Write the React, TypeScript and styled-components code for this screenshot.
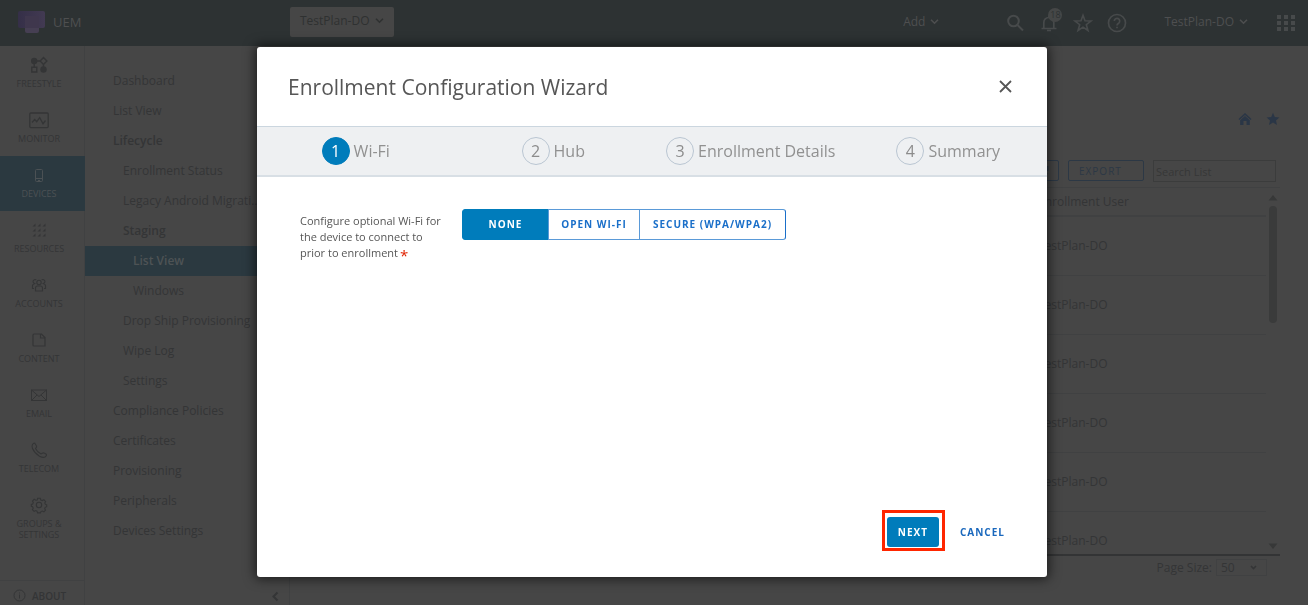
import React from "react";
import styled, { createGlobalStyle, css } from "styled-components";

const Global = createGlobalStyle`
  *, *::before, *::after { box-sizing: border-box; }
  body { margin: 0; background: #464646; }
  button, input, select { font: inherit; color: inherit; margin: 0; }
  a { color: inherit; text-decoration: none; }
  svg { display: block; flex: none; }
`;

const ink = "#343536";
const line = "#404142";

const Page = styled.div`
  height: 100vh;
  min-height: 605px;
  display: flex;
  flex-direction: column;
  font: 12px/18px "Open Sans", sans-serif;
  color: ${ink};
  background: #464646;
`;

const TopBar = styled.header`
  height: 46px;
  flex: none;
  display: flex;
  align-items: center;
  background: #2d3233;
  color: #4e4f50;
`;

const Brand = styled.a`
  width: 290px;
  flex: none;
  padding: 0 0 2px 18px;
  display: flex;
  align-items: center;
  gap: 8px;
  font-size: 13px;
  line-height: 22px;
`;

const MenuButton = styled.button`
  border: 0;
  padding: 0;
  background: none;
  display: flex;
  align-items: center;
  gap: 5px;
  white-space: nowrap;
`;

const ScopeButton = styled(MenuButton)`
  height: 30px;
  padding: 0 10px 2px;
  border-radius: 2px;
  background: #464646;
  color: #2f3131;
  margin-bottom: 3px;
`;

const TopActions = styled.div`
  margin-left: auto;
  display: flex;
  align-items: center;
  padding-right: 13px;
  padding-bottom: 3px;
`;

const IconGroup = styled.div`
  display: flex;
  align-items: center;
  gap: 14px;
  padding-top: 2px;
  margin-left: 66px;
  margin-right: 37px;
  color: #474a4b;
`;

const IconButton = styled.button`
  position: relative;
  border: 0;
  padding: 0;
  background: none;
  display: flex;
`;

const Badge = styled.span`
  position: absolute;
  left: 9px;
  top: -5px;
  width: 14px;
  height: 14px;
  border-radius: 7px;
  background: #454747;
  color: #2d3233;
  font-size: 9px;
  line-height: 14px;
  text-align: center;
`;

const AppsButton = styled(IconButton)`
  margin-left: 29px;
  padding-top: 3px;
  color: #474a4b;
`;

const Columns = styled.div`
  flex: 1;
  min-height: 0;
  display: flex;
`;

const Rail = styled.nav`
  width: 85px;
  flex: none;
  display: flex;
  flex-direction: column;
  border-right: 1px solid ${line};
`;

const RailItem = styled.a<{ $active?: boolean }>`
  height: 55px;
  flex: none;
  padding: 10px 7px 0 0;
  display: flex;
  flex-direction: column;
  align-items: center;
  gap: 4px;
  font-size: 9px;
  line-height: 11px;
  text-align: center;
  margin-right: -1px;
  ${(p) => p.$active && css`background: #2b3940; color: #4b5154;`}
`;

const About = styled.a`
  margin-top: auto;
  height: 25px;
  display: flex;
  align-items: center;
  gap: 6px;
  padding: 5px 0 0 13px;
  border-top: 1px solid ${line};
  font-size: 10px;
  line-height: 14px;
  font-weight: 600;
`;

const SubNav = styled.nav`
  width: 205px;
  flex: none;
  display: flex;
  flex-direction: column;
  padding-top: 20px;
  border-right: 1px solid ${line};
`;

const SubLink = styled.a<{ $level: number; $bold?: boolean; $active?: boolean }>`
  display: block;
  padding: 0 28px 0 ${(p) => 18 + p.$level * 10}px;
  line-height: 30px;
  white-space: nowrap;
  overflow: hidden;
  text-overflow: ellipsis;
  font-weight: ${(p) => (p.$bold ? 600 : 400)};
  ${(p) => p.$active && css`background: #2b3940; color: #4e5355;`}
`;

const Collapse = styled(IconButton)`
  margin: auto 10px 3px auto;
`;

const Main = styled.main`
  flex: 1;
  min-width: 0;
  display: flex;
  flex-direction: column;
  padding: 66px 28px 0 32px;
`;

const PageLinks = styled.div`
  display: flex;
  justify-content: flex-end;
  gap: 14px;
  color: #2a3646;
`;

const Tools = styled.div`
  display: flex;
  justify-content: flex-end;
  align-items: flex-start;
  gap: 9px;
  padding: 34px 4px 5px 0;
`;

const ToolButton = styled.button<{ $w: number }>`
  width: ${(p) => p.$w}px;
  height: 21px;
  display: flex;
  align-items: center;
  padding: 0 10px;
  border: 1px solid #2c3845;
  border-radius: 2px;
  background: none;
  color: #2c3845;
  font-size: 10px;
  letter-spacing: 1px;
`;

const Search = styled.input`
  width: 123px;
  height: 22px;
  padding: 0 2px;
  border: 1px solid #3b3c3c;
  border-radius: 0;
  background: none;
  font-size: 11px;
  &::placeholder { color: #363737; opacity: 1; }
`;

const ListFrame = styled.div`
  flex: 1;
  min-height: 0;
  display: flex;
  overflow: hidden;
  border-top: 1px solid ${line};
  border-bottom: 2px solid #333435;
`;

const Table = styled.table`
  flex: 1;
  display: table;
  border-collapse: collapse;
  table-layout: fixed;
  height: 383px;
  th, td {
    padding: 0 0 0 calc(100% - 228px);
    height: 59px;
    text-align: left;
    font-weight: 400;
    border-bottom: 1px solid ${line};
  }
  th { height: 28px; border-bottom: 2px solid ${line}; }
`;

const ScrollTrack = styled.div`
  width: 14px;
  flex: none;
  padding: 7px 3px 5px;
  display: flex;
  flex-direction: column;
  align-items: center;
  gap: 5px;
  color: #373838;
`;

const Thumb = styled.div`
  width: 8px;
  height: 117px;
  border-radius: 4px;
  background: #3a3b3b;
  margin-bottom: auto;
`;

const Pager = styled.label`
  height: 49px;
  flex: none;
  display: flex;
  align-items: flex-start;
  justify-content: flex-end;
  gap: 4px;
  padding: 3px 13px 0 0;
`;

const SelectWrap = styled.span`
  display: grid;
  align-items: center;
  width: 51px;
  height: 17px;
  border: 1px solid ${line};
  > * { grid-area: 1 / 1; }
  > svg { justify-self: end; margin-right: 9px; pointer-events: none; }
`;

const PageSize = styled.select`
  appearance: none;
  width: 100%;
  height: 15px;
  padding: 0 4px;
  border: 0;
  background: none;
  line-height: 15px;
`;

const Backdrop = styled.div`
  position: fixed;
  inset: 0;
  display: flex;
  padding: 47px 261px 28px 257px;
`;

const Dialog = styled.section`
  flex: 1;
  display: flex;
  flex-direction: column;
  background: #fff;
  border-radius: 3px;
  box-shadow: 0 0 12px 2px rgba(0, 0, 0, 0.6);
  color: #565656;
  font-family: "Open Sans", sans-serif;
`;

const DialogHead = styled.div`
  height: 79px;
  flex: none;
  display: flex;
  align-items: center;
  justify-content: space-between;
  padding: 0 35px 0 31px;
`;

const Title = styled.h1`
  margin: 0;
  font-size: 21px;
  line-height: 28px;
  font-weight: 400;
`;

const Steps = styled.ol`
  margin: 0;
  padding: 0;
  height: 51px;
  flex: none;
  list-style: none;
  display: grid;
  grid-template-columns: repeat(4, 1fr);
  align-items: center;
  background: #eef0f2;
  border-top: 1px solid #cbd6df;
  border-bottom: 2px solid #d8dfe5;
`;

const Step = styled.li`
  display: flex;
  align-items: center;
  justify-content: center;
  gap: 4px;
  font-size: 16px;
  line-height: 20px;
  color: #919191;
  white-space: nowrap;
`;

const StepNumber = styled.span<{ $current: boolean }>`
  width: 28px;
  height: 28px;
  border-radius: 50%;
  line-height: 26px;
  text-align: center;
  border: 1px solid ${(p) => (p.$current ? "#007cbb" : "#bac6d2")};
  background: ${(p) => (p.$current ? "#007cbb" : "transparent")};
  color: ${(p) => (p.$current ? "#fff" : "#8c8c8c")};
`;

const Field = styled.fieldset`
  border: 0;
  margin: 0;
  padding: 32px 43px 0;
  min-width: 0;
  display: flex;
  align-items: flex-start;
  gap: 12px;
`;

const FieldLabel = styled.div`
  width: 150px;
  flex: none;
  padding-top: 4px;
  font-size: 11px;
  line-height: 16px;
`;

const Required = styled.span`
  display: inline-block;
  vertical-align: top;
  color: #e02200;
  font-size: 15px;
  line-height: 20px;
  height: 16px;
  margin-left: 2px;
`;

const Segments = styled.div`
  display: flex;
  height: 31px;
`;

const buttonText = css`
  font-size: 10px;
  line-height: 16px;
  font-weight: 700;
  letter-spacing: 1px;
`;

const Segment = styled.button<{ $on?: boolean; $w: number }>`
  ${buttonText}
  width: ${(p) => p.$w}px;
  padding: 0 0 1px;
  border: 1px solid #5a9ad8;
  margin-left: -1px;
  background: ${(p) => (p.$on ? "#007cbb" : "#fff")};
  color: ${(p) => (p.$on ? "#fff" : "#1a6fc9")};
  white-space: nowrap;
  &:first-child { border-radius: 3px 0 0 3px; border-color: #007cbb; margin-left: 0; }
  &:last-child { border-radius: 0 3px 3px 0; border-right-color: #1a6fc9; }
`;

const DialogFoot = styled.div`
  margin-top: auto;
  display: flex;
  align-items: center;
  justify-content: flex-end;
  gap: 15px;
  padding: 0 42px 26px;
`;

const Highlight = styled.div`
  border: 3px solid #ff2600;
  padding: 4px 3px 1px 2px;
`;

const Next = styled.button`
  ${buttonText}
  display: block;
  width: 52px;
  height: 30px;
  padding: 0;
  border: 0;
  border-radius: 3px;
  background: #007cbb;
  color: #fff;
`;

const Cancel = styled.button`
  ${buttonText}
  padding: 2px 0 0;
  border: 0;
  background: none;
  color: #1a68bd;
`;

const Svg = ({ w, h, children, sw = 1, fill = "none" }: { w: number; h: number; children: React.ReactNode; sw?: number; fill?: string }) => (
  <svg width={w} height={h} viewBox={`0 0 ${w} ${h}`} fill={fill} stroke={fill === "none" ? "currentColor" : "none"} strokeWidth={sw} aria-hidden="true">
    {children}
  </svg>
);

const Chevron = () => (
  <Svg w={9} h={7} sw={1.6}><path d="M1 1.7l3.5 3.5L8 1.7" /></Svg>
);

const dots = [0, 1, 2].flatMap((r) => [0, 1, 2].map((c) => [c, r]));

const railIcons: Record<string, React.ReactNode> = {
  Freestyle: (
    <Svg w={18} h={18} sw={1.4}>
      <circle cx="4.2" cy="5" r="3.2" fill="currentColor" stroke="none" />
      <circle cx="13.5" cy="13.5" r="3.2" fill="currentColor" stroke="none" />
      <path d="M13.5 1.4L16.9 5l-3.4 3.5L10.1 5zM1.8 11.2h5v4.8h-5zM4.2 7.5v3.5M7 5h3M13.5 8.5v2.5" />
    </Svg>
  ),
  Monitor: (
    <Svg w={20} h={18} sw={1.3}>
      <rect x=".8" y="2" width="18.4" height="14.6" rx="1" />
      <path d="M3 11.5l2.7-3 2 2.2 3-4 3.3 6 2.5-3.2" />
    </Svg>
  ),
  Devices: (
    <Svg w={18} h={18}>
      <rect x="5.5" y="3.5" width="7" height="12" rx="1" />
      <path d="M5.5 12.500h7M8 14.500h2" />
    </Svg>
  ),
  Resources: (
    <Svg w={18} h={18} fill="currentColor">
      {dots.map(([c, r]) => <path key={`${c}${r}`} d={`M${2.5 + c * 5} ${5.5 + r * 5}h3v-3z`} />)}
    </Svg>
  ),
  Accounts: (
    <Svg w={18} h={18} sw={1.1}>
      <circle cx="9" cy="6.5" r="2.2" />
      <path d="M5.5 15v-3q0-2 2-2h3q2 0 2 2v3zM5.5 7.5a2 2 0 1 1 .8-3.5M12.5 7.5a2 2 0 1 0-.8-3.5M4 12.5H2.5V10q0-2 2-2M14 12.5h1.5V10q0-2-2-2" />
    </Svg>
  ),
  Content: (
    <Svg w={18} h={18} sw={1.2}>
      <path d="M4 3h7.500L15 6.500V15H4q-1 0-1-1V4q0-1 1-1zM10.500 3v4H15" />
    </Svg>
  ),
  Email: (
    <Svg w={18} h={18}>
      <rect x="1.5" y="4" width="15" height="10.5" />
      <path d="M1.500 4L9 10.500 16.500 4M1.500 14.500L7 9M16.500 14.500L11 9" />
    </Svg>
  ),
  Telecom: (
    <Svg w={18} h={18} sw={1.1}>
      <path d="M2.500 3.500q1.500-2 2.500-1 2 2.500 1.500 3.700l-1 1.300q2 4 5.500 5.500l1.800-1q1.200-.5 3.700 1.500.5 1-1.500 2.500-2 1-5.500-.8-5-3-7-7.700-1-2.500 0-4z" />
    </Svg>
  ),
  "Groups & Settings": (
    <Svg w={18} h={18} sw={1.1}>
      <circle cx="9" cy="9" r="2.700" />
      <path d="M7.700 2.300h2.600l.5 1.700 1.500.6 1.600-.9 1.700 1.800-.8 1.500.6 1.400 1.300.4v1.900l-1.500.6-.5 1.300.8 1.500-1.600 1.700-1.600-.8-1.400.6-.5 1.300H7.600L7 15.200l-1.300-.6-1.600.8-1.700-1.700.8-1.500-.6-1.400-1.300-.5V8.400L2.700 8l.6-1.500-.8-1.500 1.700-1.700 1.600.9L7.200 4z" />
    </Svg>
  ),
};

const nav: { text: string; level: number; bold?: boolean; active?: boolean }[] = [
  { text: "Dashboard", level: 1 },
  { text: "List View", level: 1 },
  { text: "Lifecycle", level: 1, bold: true },
  { text: "Enrollment Status", level: 2 },
  { text: "Legacy Android Migration", level: 2 },
  { text: "Staging", level: 2, bold: true },
  { text: "List View", level: 3, bold: true, active: true },
  { text: "Windows", level: 3 },
  { text: "Drop Ship Provisioning", level: 2 },
  { text: "Wipe Log", level: 2 },
  { text: "Settings", level: 2 },
  { text: "Compliance Policies", level: 1 },
  { text: "Certificates", level: 1 },
  { text: "Provisioning", level: 1 },
  { text: "Peripherals", level: 1 },
  { text: "Devices Settings", level: 1 },
];

const users = Array.from({ length: 6 }, () => "TestPlan-DO");
const steps = ["Wi-Fi", "Hub", "Enrollment Details", "Summary"];

export default function App() {
  return (
    <>
      <Global />
      <Page>
        <TopBar>
          <Brand href="#">
            <svg width="27" height="23" viewBox="0 0 27 23" aria-hidden="true">
              <defs>
                <linearGradient id="brand-screen">
                  <stop offset="0" stopColor="#352f48" />
                  <stop offset="1" stopColor="#423a52" />
                </linearGradient>
              </defs>
              <rect width="27" height="17" rx="2" fill="url(#brand-screen)" />
              <rect x="7" y="5" width="14" height="17" rx="2" fill="#463f53" />
              <rect x="7" y="5" width="14" height="12" fill="#3f374d" />
            </svg>
            UEM
          </Brand>
          <ScopeButton type="button">TestPlan-DO <Chevron /></ScopeButton>
          <TopActions>
            <MenuButton type="button">Add <Chevron /></MenuButton>
            <IconGroup>
              <IconButton type="button" aria-label="Search">
                <Svg w={20} h={20} sw={2}><circle cx="8.500" cy="8" r="5.300" /><path d="M12.500 12l5.500 5.500" /></Svg>
              </IconButton>
              <IconButton type="button" aria-label="Notifications">
                <Svg w={20} h={20} sw={1.7}>
                  <path d="M2.500 15.500h15M4.800 15.500V9.500a5 5 0 0 1 10 0v6M8 17.500h4" />
                  <path d="M9.800 2.500v2" />
                </Svg>
                <Badge>18</Badge>
              </IconButton>
              <IconButton type="button" aria-label="Favorites">
                <Svg w={20} h={20} sw={1.6}><path d="M10 2.300l2 5.500 6 .2-4.700 3.700 1.700 5.800-5-3.400-5 3.400 1.700-5.800L2 8l6-.2z" /></Svg>
              </IconButton>
              <IconButton type="button" aria-label="Help">
                <Svg w={20} h={20} sw={1.7}>
                  <circle cx="10" cy="10" r="8.500" />
                  <path d="M7.300 8a2.700 2.700 0 1 1 4.300 2.200Q10 11.200 10 12.400M10 13.700v1.600" />
                </Svg>
              </IconButton>
            </IconGroup>
            <MenuButton type="button">TestPlan-DO <Chevron /></MenuButton>
            <AppsButton type="button" aria-label="Apps">
              <Svg w={18} h={18} fill="currentColor">
                {dots.map(([c, r]) => <rect key={`${c}${r}`} x={c * 7} y={1 + r * 6} width="4" height="4" />)}
              </Svg>
            </AppsButton>
          </TopActions>
        </TopBar>
        <Columns>
          <Rail aria-label="Sections">
            {Object.entries(railIcons).map(([name, icon]) => (
              <RailItem key={name} href="#" $active={name === "Devices"}>
                {icon}
                {name.toUpperCase()}
              </RailItem>
            ))}
            <About href="#">
              <Svg w={13} h={13}><circle cx="6.500" cy="6.500" r="5.500" /><path d="M6.500 3.500v1M6.500 5.500v4" /></Svg>
              ABOUT
            </About>
          </Rail>
          <SubNav aria-label="Devices">
            {nav.map((n, i) => (
              <SubLink key={i} href="#" $level={n.level} $bold={n.bold} $active={n.active}>{n.text}</SubLink>
            ))}
            <Collapse type="button" aria-label="Collapse menu">
              <Svg w={8} h={11} sw={2}><path d="M6.500 1.500l-4 4 4 4" /></Svg>
            </Collapse>
          </SubNav>
          <Main>
            <PageLinks>
              <a href="#" aria-label="Home">
                <Svg w={14} h={14} fill="currentColor"><path d="M7 1l6.500 6-.9.900L7 3 1.400 7.900.5 7zM7 4l4.800 4.200V13H8.500V9h-3v4H2.200V8.200z" /></Svg>
              </a>
              <a href="#" aria-label="Favorite">
                <Svg w={14} h={14} fill="currentColor"><path d="M7 .8l1.800 4.100 4.600.5L10 8.400l1 4.600-4-2.400L3 13l1-4.600L.6 5.400l4.600-.5z" /></Svg>
              </a>
            </PageLinks>
            <Tools>
              <ToolButton type="button" $w={33} aria-label="Refresh">
                <Svg w={12} h={12} sw={2}><path d="M10 4.500A4.300 4.300 0 1 0 10 8M10.500 1v4h-4" /></Svg>
              </ToolButton>
              <ToolButton type="button" $w={76}>EXPORT</ToolButton>
              <Search aria-label="Search List" placeholder="Search List" />
            </Tools>
            <ListFrame>
              <Table>
                <thead><tr><th>Enrollment User</th></tr></thead>
                <tbody>{users.map((u, i) => <tr key={i}><td>{u}</td></tr>)}</tbody>
              </Table>
              <ScrollTrack>
                <Svg w={10} h={6} fill="currentColor"><path d="M5 0l4.500 5.500h-9z" /></Svg>
                <Thumb />
                <Svg w={10} h={6} fill="currentColor"><path d="M5 6L.5.500h9z" /></Svg>
              </ScrollTrack>
            </ListFrame>
            <Pager>
              Page Size:
              <SelectWrap>
                <PageSize defaultValue="50"><option>50</option><option>100</option></PageSize>
                <Svg w={7} h={5} sw={1.6}><path d="M1 1l2.500 2.500L6 1" /></Svg>
              </SelectWrap>
            </Pager>
          </Main>
        </Columns>
      </Page>
      <Backdrop>
        <Dialog role="dialog" aria-modal="true" aria-labelledby="wizard-title">
          <DialogHead>
            <Title id="wizard-title">Enrollment Configuration Wizard</Title>
            <IconButton type="button" aria-label="Close">
              <Svg w={13} h={13} sw={1.8}><path d="M1 1l11 11M12 1L1 12" /></Svg>
            </IconButton>
          </DialogHead>
          <Steps>
            {steps.map((s, i) => (
              <Step key={s} aria-current={i === 0 ? "step" : undefined}>
                <StepNumber $current={i === 0}>{i + 1}</StepNumber>
                {s}
              </Step>
            ))}
          </Steps>
          <Field aria-labelledby="wifi-label">
            <FieldLabel id="wifi-label">
              Configure optional Wi-Fi for the device to connect to prior to enrollment<Required>*</Required>
            </FieldLabel>
            <Segments>
              <Segment type="button" $w={87} $on aria-pressed="true">NONE</Segment>
              <Segment type="button" $w={92} aria-pressed="false">OPEN WI-FI</Segment>
              <Segment type="button" $w={147} aria-pressed="false">SECURE (WPA/WPA2)</Segment>
            </Segments>
          </Field>
          <DialogFoot>
            <Highlight><Next type="button">NEXT</Next></Highlight>
            <Cancel type="button">CANCEL</Cancel>
          </DialogFoot>
        </Dialog>
      </Backdrop>
    </>
  );
}
